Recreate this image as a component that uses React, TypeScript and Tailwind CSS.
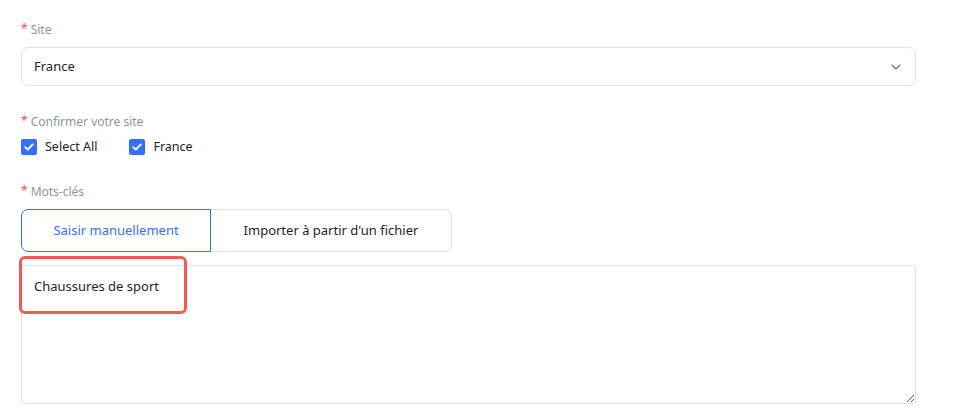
import React from "react";

function Label({ text, className = "" }: { text: string; className?: string }) {
  return (
    <div className={`flex items-center h-5 text-[12px] leading-5 text-[#8f959e] ${className}`}>
      <span className="text-[#f54a45] mr-[3px] text-[12px] relative top-[-1px]">*</span>
      <span>{text}</span>
    </div>
  );
}

function Check({ label }: { label: string }) {
  return (
    <div className="flex items-center">
      <div className="w-4 h-4 rounded-[2px] bg-[#3370ff] flex items-center justify-center">
        <svg width="10" height="8" viewBox="0 0 10 8" fill="none">
          <path d="M1.2 4.1 L3.8 6.5 L8.8 1.4" stroke="white" strokeWidth="1.8" strokeLinecap="round" strokeLinejoin="round" />
        </svg>
      </div>
      <span className="ml-[8px] text-[12.5px] text-[#1f2329] leading-5">{label}</span>
    </div>
  );
}

export default function App() {
  return (
    <div
      className="w-[953px] h-[419px] bg-white pl-[21px] pt-[20px] overflow-hidden"
      style={{ fontFamily: '"Noto Sans", "Open Sans", sans-serif' }}
    >
      <div className="w-[895px]">
        <Label text="Site" />
        <div className="mt-[7px] h-[39px] border border-[#dee0e3] rounded-[7px] flex items-center justify-between pl-[12px] pr-[14px]">
          <span className="text-[13px] text-[#1f2329]">France</span>
          <svg width="10" height="6" viewBox="0 0 10 6" fill="none">
            <path d="M1 1 L5 5 L9 1" stroke="#646a73" strokeWidth="1.1" strokeLinecap="round" strokeLinejoin="round" />
          </svg>
        </div>

        <Label text="Confirmer votre site" className="mt-[26px]" />
        <div className="mt-[7px] flex items-center h-4 gap-[32px]">
          <Check label="Select All" />
          <Check label="France" />
        </div>

        <Label text="Mots-clés" className="mt-[27px]" />
        <div className="mt-[7px] flex h-[43px]">
          <div className="w-[190px] h-full border border-[#3370ff] rounded-l-[7px] flex items-center justify-center text-[13px] text-[#3370ff]">
            Saisir manuellement
          </div>
          <div className="w-[241px] h-full border border-l-0 border-[#dee0e3] rounded-r-[7px] flex items-center justify-center text-[13px] text-[#1f2329]">
            Importer à partir d'un fichier
          </div>
        </div>

        <div className="relative mt-[13px]">
          <textarea
            className="block w-[895px] h-[139px] border border-[#dee0e3] rounded-[4px] pl-[12px] pt-[11px] text-[13px] text-[#1f2329] outline-none resize-y"
            style={{ fontFamily: '"Noto Sans", "Open Sans", sans-serif' }}
            defaultValue="Chaussures de sport"
          />
          <div className="absolute left-[-2px] top-[-9px] w-[168px] h-[58px] border-[3px] border-[#ee5a56] rounded-[6px] pointer-events-none" />
        </div>
      </div>
    </div>
  );
}
